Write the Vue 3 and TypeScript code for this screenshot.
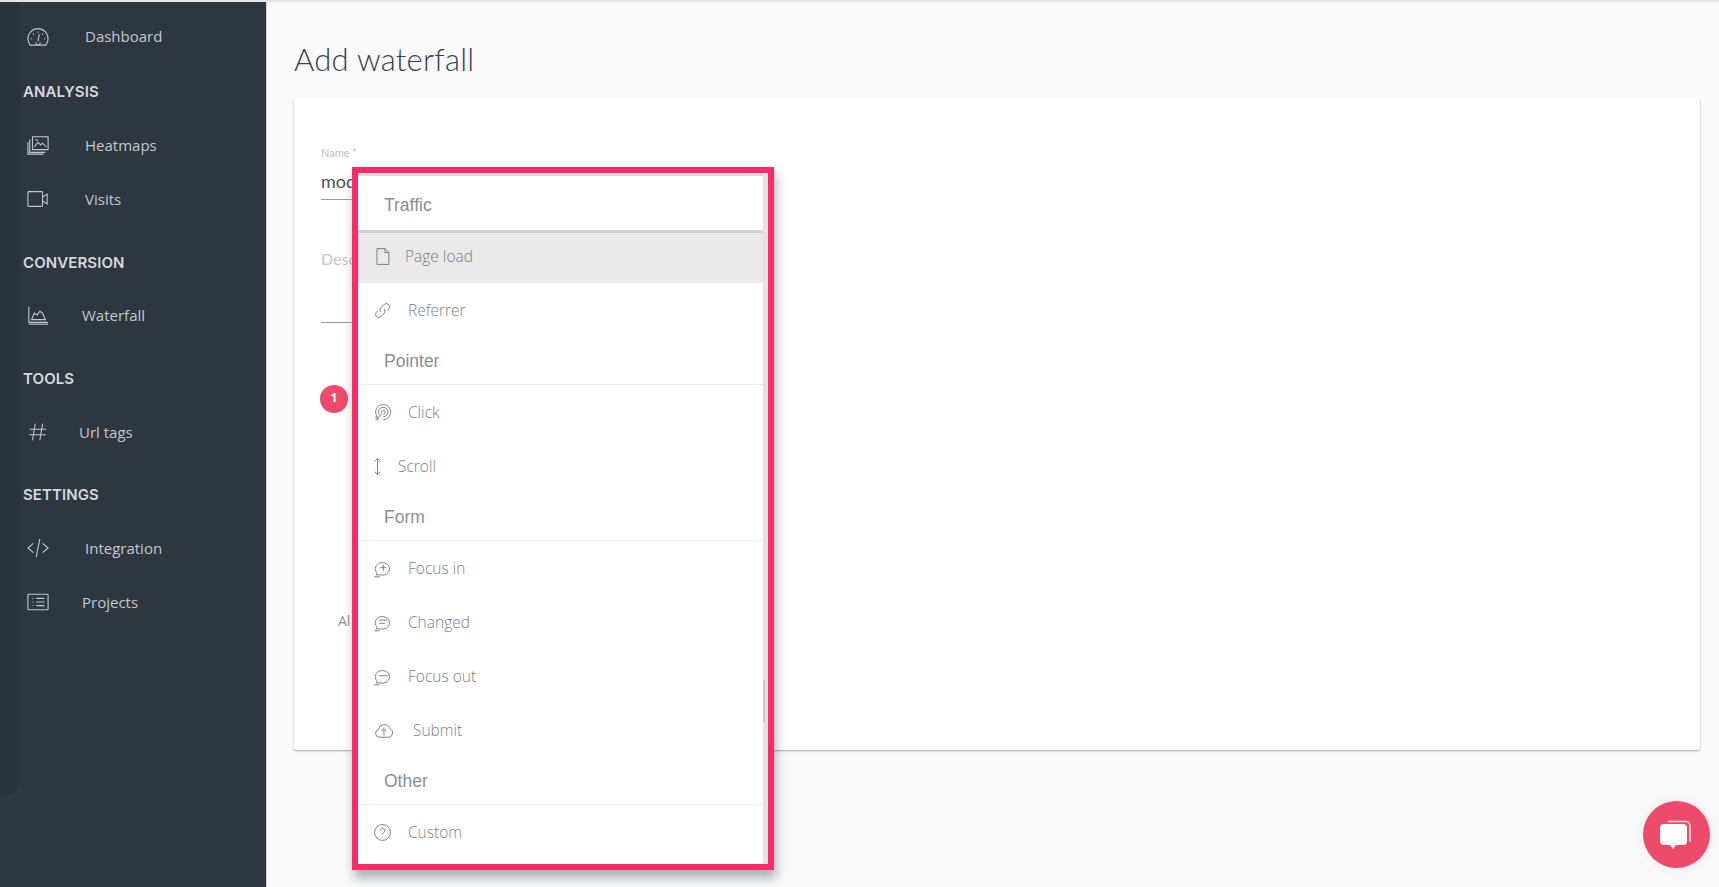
<script setup lang="ts">
interface NavItem { label: string; icon: string; gap: number }
interface NavSection { title?: string; items: NavItem[] }
interface MenuItem { label: string; icon: string; gap: number; active?: boolean }
interface MenuGroup { title: string; items: MenuItem[] }

const icons: Record<string, string[]> = {
  gauge: ['M3.500 22C2 20 1 18 1 15a11 11 0 0 1 22 0c0 3-1 5-2.500 7z', 'M12 18l1.400-8', 'M4 15h1.500M18.500 15H20M6.500 9.500l1 1M17.500 9.500l-1 1M12 7v1.500', 'M9.800 19a2.300 2.300 0 1 0 4.400 0'],
  images: ['M6 3h17v14H6z', 'M3 6v14h17', 'M1 9v13h17', 'M8 14l4-5 3 3 2-2 4 4', 'M9 6l3 1'],
  video: ['M2 4h14a1 1 0 0 1 1 1v14a1 1 0 0 1-1 1H2a1 1 0 0 1-1-1V5a1 1 0 0 1 1-1z', 'M17 10l5-3.500v11L17 14'],
  chart: ['M2 3v17h21', 'M2 22h21', 'M5 17l3-7 3 2 3-4 3 2 3 7z'],
  hash: ['M9 3L6 21M17 3l-3 18M3 9h18M2.500 15h18'],
  code: ['M7 7l-6 5 6 5', 'M17 7l6 5-6 5', 'M14 2l-4 20'],
  list: ['M2 3.500h20a1 1 0 0 1 1 1v15a1 1 0 0 1-1 1H2a1 1 0 0 1-1-1v-15a1 1 0 0 1 1-1z', 'M6 8h1M10 8h9M6 12h1M10 12h9M6 16h1M10 16h9'],
  file: ['M5 2h10l5 5v15H5z', 'M15 2v5h5'],
  link: ['M10 14a4 4 0 0 1 0-5.500l4.500-4.500a4 4 0 0 1 5.600 5.600L18 11.500', 'M14 10a4 4 0 0 1 0 5.500l-4.500 4.500a4 4 0 0 1-5.600-5.600L6 12.500'],
  click: ['M7 19a9.500 9.500 0 1 1 6 2', 'M8.500 15.500a6 6 0 1 1 4.500 2', 'M11 13a2.500 2.500 0 1 1 2 1', 'M3 22l8-8', 'M3 18h3M6 22v-3'],
  scroll: ['M12 2v20', 'M8.500 5.500L12 2l3.500 3.500', 'M8.500 18.500L12 22l3.500-3.500'],
  focusIn: ['M4 20c1-1 1-2 .5-3A9 8 0 1 1 9 20z', 'M1.500 22.500h7', 'M13 7v8M9 11h8'],
  changed: ['M4 20c1-1 1-2 .5-3A9 8 0 1 1 9 20z', 'M1.500 22.500h7', 'M8 9h10M8 13h7'],
  focusOut: ['M4 20c1-1 1-2 .5-3A9 8 0 1 1 9 20z', 'M1.500 22.500h7', 'M8 11h10'],
  cloud: ['M6 20.500a5 5 0 0 1-1-9.800 7.500 7.500 0 0 1 14.300-1.500A6 6 0 0 1 18.500 20.500z', 'M12 18v-8M8.500 13l3.500-3.500 3.500 3.500'],
  help: ['M12 2a10 10 0 1 0 0 20 10 10 0 0 0 0-20z', 'M9 9.500a3 3 0 1 1 4.500 2.600c-1 .6-1.500 1.200-1.500 2.400', 'M12 17.500v.5'],
}

const sections: NavSection[] = [
  { items: [{ label: 'Dashboard', icon: 'gauge', gap: 36 }] },
  { title: 'ANALYSIS', items: [
    { label: 'Heatmaps', icon: 'images', gap: 36 },
    { label: 'Visits', icon: 'video', gap: 36 },
  ] },
  { title: 'CONVERSION', items: [{ label: 'Waterfall', icon: 'chart', gap: 33 }] },
  { title: 'TOOLS', items: [{ label: 'Url tags', icon: 'hash', gap: 30 }] },
  { title: 'SETTINGS', items: [
    { label: 'Integration', icon: 'code', gap: 36 },
    { label: 'Projects', icon: 'list', gap: 33 },
  ] },
]

const groups: MenuGroup[] = [
  { title: 'Traffic', items: [
    { label: 'Page load', icon: 'file', gap: 28, active: true },
    { label: 'Referrer', icon: 'link', gap: 31 },
  ] },
  { title: 'Pointer', items: [
    { label: 'Click', icon: 'click', gap: 31 },
    { label: 'Scroll', icon: 'scroll', gap: 21 },
  ] },
  { title: 'Form', items: [
    { label: 'Focus in', icon: 'focusIn', gap: 31 },
    { label: 'Changed', icon: 'changed', gap: 31 },
    { label: 'Focus out', icon: 'focusOut', gap: 31 },
    { label: 'Submit', icon: 'cloud', gap: 33 },
  ] },
  { title: 'Other', items: [{ label: 'Custom', icon: 'help', gap: 31 }] },
]
</script>

<template>
  <div class="page">
    <aside class="sidebar">
      <section v-for="(section, i) in sections" :key="i" class="nav-section">
        <h3 v-if="section.title" class="nav-title">{{ section.title }}</h3>
        <a v-for="item in section.items" :key="item.label" class="nav-item">
          <span class="nav-icon-box">
            <svg class="nav-icon" viewBox="0 0 24 24">
              <path v-for="d in icons[item.icon]" :key="d" :d="d" />
            </svg>
          </span>
          <span class="nav-label" :style="{ marginLeft: item.gap + 'px' }">{{ item.label }}</span>
        </a>
      </section>
    </aside>

    <main class="main">
      <h1 class="title">Add waterfall</h1>
      <div class="card">
        <div class="field">
          <label class="field-label">Name *</label>
          <div class="field-value">mod</div>
        </div>
        <div class="field field-desc">
          <div class="field-placeholder">Description</div>
        </div>
        <div class="step-badge">1</div>
        <div class="add-link">Al</div>
      </div>

      <div class="menu-frame">
        <div class="menu">
          <div class="menu-scroll">
            <div v-for="(group, g) in groups" :key="group.title" class="menu-group">
              <div class="menu-title" :class="{ first: g === 0 }">{{ group.title }}</div>
              <div
                v-for="item in group.items"
                :key="item.label"
                class="menu-item"
                :class="{ active: item.active }"
              >
                <span class="menu-icon-box">
                  <svg class="menu-icon" :class="'icon-' + item.icon" viewBox="0 0 24 24">
                    <path v-for="d in icons[item.icon]" :key="d" :d="d" />
                  </svg>
                </span>
                <span class="menu-label" :style="{ marginLeft: item.gap - 15 + 'px' }">{{ item.label }}</span>
              </div>
            </div>
          </div>
          <div class="menu-track"><div class="menu-thumb"></div></div>
        </div>
      </div>

      <button class="chat">
        <svg class="chat-icon" viewBox="0 0 36 32">
          <path class="chat-back" d="M9 2.500h18a4 4 0 0 1 4 4v16" />
          <path class="chat-front" d="M5 5h19a4 4 0 0 1 4 4v13a4 4 0 0 1-4 4h-7l-3 4-3-4H5a4 4 0 0 1-4-4V9a4 4 0 0 1 4-4z" />
        </svg>
      </button>
    </main>
  </div>
</template>

<style>
html, body { margin: 0; background: #fafafa; overflow: hidden; }
</style>

<style scoped>
.page {
  display: flex;
  height: 887px;
  box-sizing: border-box;
  border-top: 2px solid #e4e4e4;
  overflow: hidden;
  font-family: "Open Sans", "Liberation Sans", sans-serif;
}

.sidebar {
  position: relative;
  flex: 0 0 267px;
  box-sizing: border-box;
  padding-top: 7px;
  background: #2e3740;
  color: #c9ccd0;
  border-right: 1px solid #cfd2d6;
}
.sidebar::before {
  content: "";
  position: absolute;
  left: 0;
  top: 0;
  width: 20px;
  height: 794px;
  background: #2a333b;
  border-bottom-right-radius: 18px;
}
.nav-section { position: relative; }
.nav-title {
  margin: 24px 0 14px;
  padding-left: 23px;
  height: 24px;
  line-height: 24px;
  font-family: Inter, "Open Sans", sans-serif;
  font-size: 15px;
  font-weight: 600;
  letter-spacing: .1px;
  color: #d6d8db;
}
.nav-section:nth-child(2) .nav-title { margin-top: 17px; }
.nav-section:nth-child(3) .nav-title { margin: 25px 0 13px; }
.nav-section:nth-child(4) .nav-title { margin-top: 25px; }
.nav-item {
  display: flex;
  align-items: center;
  height: 54px;
  padding-left: 27px;
  font-size: 15px;
}
.nav-icon-box { flex: 0 0 22px; display: flex; }
.nav-icon { width: 22px; height: 22px; }
.nav-icon path {
  fill: none;
  stroke: #c2c6ca;
  stroke-width: 1.200;
}
.nav-label { color: #c4c7cb; }

.main {
  position: relative;
  flex: 1;
  min-width: 0;
  padding: 0 19px 0 27px;
  background: #fafafa;
}
.title {
  margin: 0;
  padding-top: 37px;
  line-height: 40px;
  font-family: Lato, sans-serif;
  font-size: 31px;
  font-weight: 300;
  letter-spacing: .25px;
  color: #39424b;
}
.card {
  box-sizing: border-box;
  height: 652px;
  margin-top: 19px;
  padding: 48px 0 0 27px;
  background: #fff;
  border-radius: 2px;
  box-shadow: 0 1px 2px rgba(0, 0, 0, .35);
}
.field { width: 449px; border-bottom: 1px solid #9a9ea3; }
.field-label {
  display: block;
  font-family: Lato, sans-serif;
  font-size: 11px;
  line-height: 14px;
  color: #b9bcc0;
}
.field-value {
  font-family: Lato, sans-serif;
  font-size: 18px;
  line-height: 24px;
  padding: 9px 0 6px;
  color: #4c5157;
}
.field-desc { margin-top: 47px; height: 75px; }
.field-placeholder {
  font-family: Lato, sans-serif;
  font-size: 16px;
  color: #c4c6c9;
  line-height: 24px;
}
.step-badge {
  width: 28px;
  height: 28px;
  margin: 62px 0 0 -1px;
  border-radius: 50%;
  background: #ee4a6c;
  color: #fff;
  font-size: 12px;
  font-weight: 700;
  line-height: 26px;
  text-align: center;
}
.add-link {
  margin: 198px 0 0 17px;
  font-size: 14px;
  line-height: 20px;
  color: #8e9398;
}

.menu-frame {
  position: absolute;
  left: 85px;
  top: 165px;
  width: 422px;
  height: 703px;
  box-sizing: border-box;
  border: 6px solid #fd2a68;
  background: #fff;
  box-shadow: 2px 8px 10px rgba(50, 60, 80, .4);
}
.menu { display: flex; height: 100%; }
.menu-scroll { flex: 0 0 405px; }
.menu-track {
  position: relative;
  flex: 1;
  background: #e2e3e5;
}
.menu-thumb {
  position: absolute;
  left: 0;
  top: 507px;
  width: 2px;
  height: 42px;
  background: #c6c8ca;
}
.menu-title {
  height: 44px;
  margin-top: 4px;
  box-sizing: border-box;
  padding: 10px 0 0 26px;
  font-family: "Liberation Sans", Arial, sans-serif;
  font-size: 17.500px;
  line-height: 20px;
  color: #8a8f94;
  border-bottom: 1px solid #ececec;
}
.menu-title.first {
  height: 60px;
  margin-top: 0;
  padding-top: 19px;
  border-top: 3px solid #dcdcdc;
  border-bottom: 3px solid #d2d2d2;
}
.menu-item {
  display: flex;
  align-items: center;
  height: 54px;
  padding-left: 15px;
  font-size: 15.500px;
  font-weight: 300;
  color: #7c8187;
}
.menu-item.active { height: 50px; padding-bottom: 4px; box-sizing: border-box; background: #e9e9e9; }
.menu-icon-box { flex: 0 0 15px; display: flex; overflow: visible; }
.menu-icon { flex: none; width: 19px; height: 19px; }
.menu-icon.icon-cloud { width: 22px; }
.menu-icon.icon-scroll { transform: translateX(-5px); }
.menu-icon path { fill: none; stroke: #777c82; stroke-width: 1.200; }

.chat {
  position: absolute;
  left: 1376px;
  top: 799px;
  width: 67px;
  height: 67px;
  padding: 0;
  border: 0;
  border-radius: 50%;
  background: #ee4a6c;
  box-shadow: 0 0 12px rgba(0, 0, 0, .08);
  display: flex;
  align-items: center;
  justify-content: center;
}
.chat-icon { width: 36px; height: 32px; }
.chat-back { fill: none; stroke: #fff; stroke-width: 1.500; opacity: .85; }
.chat-front { fill: #fff; }
</style>
